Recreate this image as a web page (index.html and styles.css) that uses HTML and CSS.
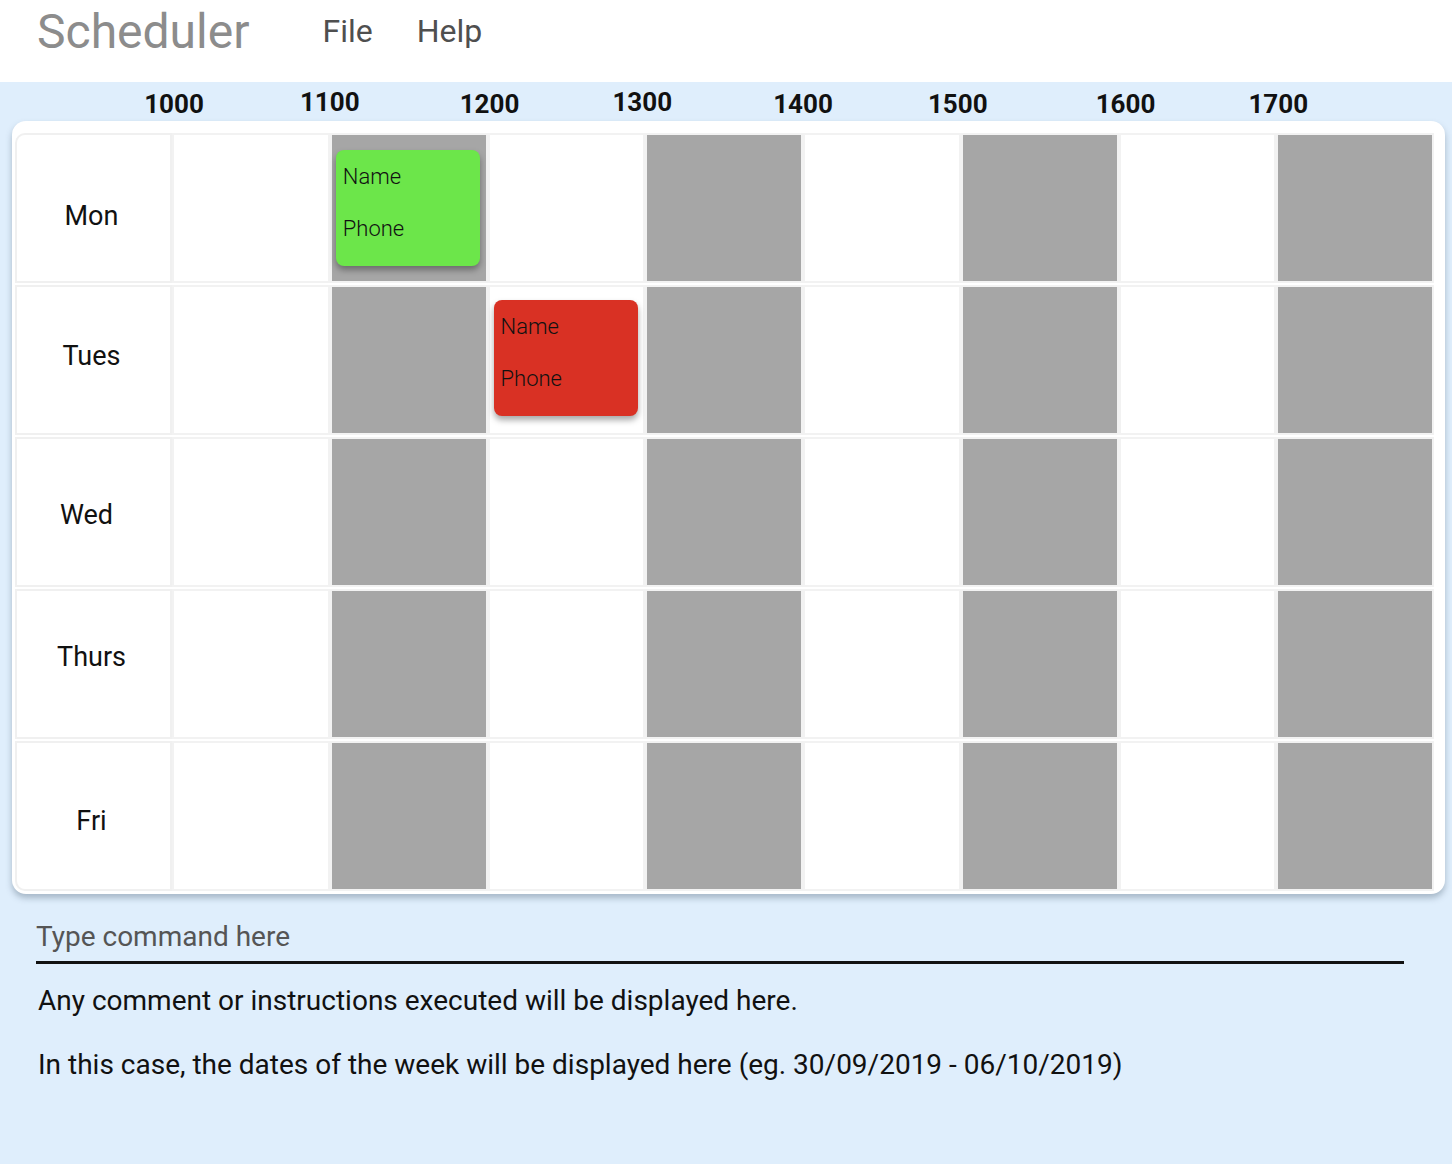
FILE: index.html
```html
<!DOCTYPE html>
<html lang="en">
<head>
<meta charset="utf-8">
<title>Scheduler</title>
<link rel="stylesheet" href="styles.css">
</head>
<body>
<header class="topbar">
  <div class="brand">Scheduler</div>
  <nav class="menu">
    <span class="menu-item">File</span>
    <span class="menu-item">Help</span>
  </nav>
</header>
<main class="workspace">
  <div class="hours">
    <div class="hour-spacer"></div>
    <div class="hour r2"><span>1000</span></div>
    <div class="hour up"><span>1100</span></div>
    <div class="hour r2"><span>1200</span></div>
    <div class="hour up l3"><span>1300</span></div>
    <div class="hour"><span>1400</span></div>
    <div class="hour l3"><span>1500</span></div>
    <div class="hour r7"><span>1600</span></div>
    <div class="hour r2"><span>1700</span></div>
  </div>
  <section class="card">
    <div class="grid">
      <div class="day first mon">Mon</div>
      <div class="slot"></div>
      <div class="slot shade">
        <div class="event green"><p>Name</p><p>Phone</p></div>
      </div>
      <div class="slot"></div>
      <div class="slot shade"></div>
      <div class="slot"></div>
      <div class="slot shade"></div>
      <div class="slot"></div>
      <div class="slot shade"></div>

      <div class="day tue">Tues</div>
      <div class="slot"></div>
      <div class="slot shade"></div>
      <div class="slot tight">
        <div class="event red"><p>Name</p><p>Phone</p></div>
      </div>
      <div class="slot shade"></div>
      <div class="slot"></div>
      <div class="slot shade"></div>
      <div class="slot"></div>
      <div class="slot shade"></div>

      <div class="day wed">Wed</div>
      <div class="slot"></div>
      <div class="slot shade"></div>
      <div class="slot"></div>
      <div class="slot shade"></div>
      <div class="slot"></div>
      <div class="slot shade"></div>
      <div class="slot"></div>
      <div class="slot shade"></div>

      <div class="day thu">Thurs</div>
      <div class="slot"></div>
      <div class="slot shade"></div>
      <div class="slot"></div>
      <div class="slot shade"></div>
      <div class="slot"></div>
      <div class="slot shade"></div>
      <div class="slot"></div>
      <div class="slot shade"></div>

      <div class="day last fri">Fri</div>
      <div class="slot"></div>
      <div class="slot shade"></div>
      <div class="slot"></div>
      <div class="slot shade"></div>
      <div class="slot"></div>
      <div class="slot shade"></div>
      <div class="slot"></div>
      <div class="slot shade"></div>
    </div>
  </section>
  <div class="command">
    <input class="command-input" type="text" placeholder="Type command here">
  </div>
  <div class="output">
    <p>Any comment or instructions executed will be displayed here.</p>
    <p>In this case, the dates of the week will be displayed here (eg. 30/09/2019 - 06/10/2019)</p>
  </div>
</main>
</body>
</html>
```

FILE: styles.css
```css
* { box-sizing: border-box; }

html, body {
  margin: 0;
  padding: 0;
  background: #ffffff;
  font-family: Roboto, "Liberation Sans", Arial, sans-serif;
  color: #111111;
}

.topbar {
  height: 82px;
  display: flex;
  align-items: flex-start;
  padding-left: 37px;
  background: #ffffff;
}

.brand {
  font-size: 48px;
  line-height: 54px;
  margin-top: 5px;
  color: #8c8c8c;
  font-weight: 400;
}

.menu {
  display: flex;
  gap: 44px;
  margin-left: 73px;
  margin-top: 12px;
}

.menu-item {
  font-size: 32px;
  line-height: 38px;
  color: #4f4f4f;
}

.workspace {
  width: 1452px;
  height: 1082px;
  background: #dfeefc;
  overflow: hidden;
}

.hours {
  display: grid;
  grid-template-columns: 157px repeat(8, 1fr);
  width: 1434px;
  padding: 7px 0 2px 15px;
}

.hour {
  font-size: 26px;
  font-weight: 700;
  line-height: 30px;
  height: 30px;
  color: #111111;
}

.hour span {
  display: inline-block;
  transform: translateX(-50%);
}

.hour.up { margin-top: -2px; }
.hour.r2 span { margin-left: 2px; }
.hour.l3 span { margin-left: -3px; }
.hour.r7 span { margin-left: 7px; }

.card {
  margin-left: 12px;
  width: 1433px;
  background: #ffffff;
  border-radius: 14px;
  padding: 12px 11px 3px 3px;
  box-shadow: 0 4px 6px rgba(60, 80, 100, 0.35);
}

.grid {
  display: grid;
  grid-template-columns: 157px repeat(8, 1fr);
  grid-auto-rows: 150px;
  row-gap: 2px;
}

.day {
  border: 2px solid #f0f0f0;
  background: #ffffff;
  display: flex;
  align-items: center;
  justify-content: center;
  font-size: 27px;
  color: #111111;
  padding-right: 4px;
}

.day.mon { padding-top: 16px; }
.day.tue { padding-bottom: 8px; }
.day.wed { padding-top: 6px; padding-right: 14px; }
.day.thu { padding-bottom: 14px; }
.day.fri { padding-top: 10px; }

.day.first { border-top-left-radius: 10px; }
.day.last { border-bottom-left-radius: 10px; }

.slot {
  border: 2px solid #f2f2f2;
  background: #ffffff;
  padding: 15px 4px 0 3px;
}

.slot.tight { padding-top: 13px; padding-left: 3px; }

.slot.shade {
  background: #a6a6a6;
}

.event {
  width: 144px;
  height: 116px;
  border-radius: 8px;
  padding: 14px 7px 0;
  box-shadow: 0 4px 6px rgba(0, 0, 0, 0.35);
}

.event p {
  margin: 0 0 26px;
  font-size: 22px;
  line-height: 26px;
  font-weight: 300;
  color: #111111;
}

.event.green { background: #6ce64a; margin-left: 1px; }
.event.red { background: #d93124; margin-left: 1px; }

.command {
  margin: 26px 0 0 36px;
  width: 1368px;
}

.command-input {
  display: block;
  width: 100%;
  border: none;
  border-bottom: 3px solid #111111;
  background: transparent;
  outline: none;
  padding: 0 0 8px 0;
  font-family: Roboto, "Liberation Sans", Arial, sans-serif;
  font-size: 28px;
  line-height: 33px;
  height: 44px;
  color: #111111;
}

.command-input::placeholder {
  color: #555555;
  opacity: 1;
}

.output {
  padding: 21px 0 0 38px;
}

.output p {
  margin: 0 0 32px;
  font-size: 28px;
  line-height: 32px;
  color: #111111;
}
```
